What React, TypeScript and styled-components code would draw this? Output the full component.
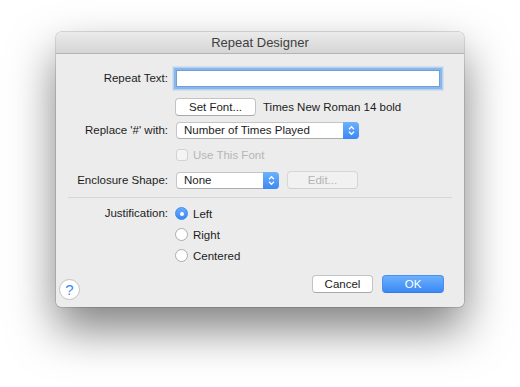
import React from 'react';
import styled, {createGlobalStyle} from 'styled-components';

const GlobalStyle = createGlobalStyle`
  html, body {
    margin: 0;
    padding: 0;
    background: #ffffff;
  }
  body {
    font-family: "Liberation Sans", Arial, sans-serif;
    -webkit-font-smoothing: antialiased;
  }
`;

const Stage = styled.div`
  padding: 32px 0 0 56px;
  height: 387px;
  box-sizing: border-box;
  overflow: hidden;
`;

const Window = styled.div`
  width: 408px;
  height: 275px;
  background: #ececec;
  border-radius: 5px;
  box-shadow: 0 0 0 0.5px rgba(0, 0, 0, 0.25), 0 22px 46px rgba(0, 0, 0, 0.5);
  display: flex;
  flex-direction: column;
  overflow: hidden;
`;

const TitleBar = styled.div`
  height: 21px;
  line-height: 21px;
  flex-shrink: 0;
  text-align: center;
  font-size: 13px;
  color: #404040;
  background: linear-gradient(#ebebeb, #d5d5d5);
  border-bottom: 1px solid #b4b4b4;
`;

const Body = styled.div`
  flex: 1;
  display: flex;
  flex-direction: column;
  font-size: 11.5px;
  color: #1c1c1c;
`;

const Row = styled.div<{ $mt: number; $h?: number; $align?: string }>`
  display: grid;
  grid-template-columns: 112px 1fr;
  column-gap: 7px;
  align-items: ${p => p.$align || 'center'};
  margin-top: ${p => p.$mt}px;
  height: ${p => (p.$h ? `${p.$h}px` : 'auto')};
`;

const Label = styled.div`
  text-align: right;
  white-space: nowrap;
  line-height: 13px;
`;

const Controls = styled.div<{ $gap?: number }>`
  display: flex;
  align-items: center;
  gap: ${p => p.$gap ?? 7}px;
`;

const TextField = styled.input`
  box-sizing: border-box;
  margin: 0 0 0 1px;
  width: 264px;
  height: 17px;
  padding: 0 4px;
  border: 1px solid #6ea1db;
  background: #ffffff;
  border-radius: 0;
  box-shadow: 0 0 0 2px #88b7ec, 0 0 0 3.5px rgba(136, 183, 236, 0.5);
  outline: none;
  font: inherit;
`;

const PushButton = styled.div<{ $w: number; $disabled?: boolean; $primary?: boolean }>`
  box-sizing: border-box;
  width: ${p => p.$w}px;
  height: 18px;
  line-height: 16px;
  text-align: center;
  border-radius: 4px;
  font-size: 11.5px;
  border: 1px solid ${p => (p.$primary ? '#4c8ff2' : p.$disabled ? '#d6d6d6' : '#c3c3c3')};
  border-bottom-color: ${p => (p.$primary ? '#3a7ae6' : p.$disabled ? '#d0d0d0' : '#a9a9a9')};
  background: ${p =>
    p.$primary
      ? 'linear-gradient(#6cb1fb, #3a89f6)'
      : p.$disabled
        ? '#f1f1f1'
        : '#ffffff'};
  color: ${p => (p.$primary ? '#ffffff' : p.$disabled ? '#b4b4b4' : '#1c1c1c')};
`;

const Note = styled.span`
  white-space: nowrap;
`;

const Popup = styled.div<{ $w: number }>`
  box-sizing: border-box;
  position: relative;
  width: ${p => p.$w}px;
  height: 17px;
  line-height: 15px;
  margin-left: 1px;
  padding-left: 7px;
  background: #ffffff;
  border: 1px solid #c5c5c5;
  border-bottom-color: #adadad;
  border-radius: 4px;
  white-space: nowrap;
`;

const Stepper = styled.div`
  position: absolute;
  top: -1px;
  right: -1px;
  bottom: -1px;
  width: 16px;
  border-radius: 0 4px 4px 0;
  background: linear-gradient(#6db2fb, #3b87f6);
  display: flex;
  align-items: center;
  justify-content: center;
`;

const CheckBox = styled.div`
  box-sizing: border-box;
  width: 12px;
  height: 12px;
  margin-left: 1px;
  border-radius: 3px;
  border: 1px solid #d2d2d2;
  background: #f4f4f4;
`;

const Dimmed = styled.span`
  color: #b6b6b6;
`;

const Separator = styled.div`
  margin: 9px 12px 0;
  height: 1px;
  background: #d6d6d6;
`;

const RadioList = styled.div`
  display: flex;
  flex-direction: column;
  gap: 8px;
`;

const RadioItem = styled.div`
  display: flex;
  align-items: center;
  gap: 5px;
  height: 13px;
`;

const RadioDot = styled.div<{ $on?: boolean }>`
  box-sizing: border-box;
  width: 13px;
  height: 13px;
  border-radius: 50%;
  border: 1px solid ${p => (p.$on ? '#3f87f2' : '#acacac')};
  background: ${p => (p.$on ? 'linear-gradient(#68acfa, #3a88f6)' : '#ffffff')};
  display: flex;
  align-items: center;
  justify-content: center;

  &::after {
    content: '';
    display: ${p => (p.$on ? 'block' : 'none')};
    width: 4px;
    height: 4px;
    border-radius: 50%;
    background: #ffffff;
  }
`;

const Footer = styled.div`
  margin-top: 13px;
  padding: 0 20px 0 3px;
  display: flex;
  justify-content: space-between;
  align-items: flex-start;
`;

const HelpButton = styled.div`
  box-sizing: border-box;
  margin-top: 4px;
  width: 21px;
  height: 21px;
  border-radius: 50%;
  background: #ffffff;
  border: 1px solid #c2c2c2;
  color: #3d86f5;
  font-size: 15px;
  line-height: 19px;
  text-align: center;
`;

const ButtonGroup = styled.div`
  display: flex;
  gap: 9px;
`;

const Chevrons = () => (
  <svg width="7" height="11" viewBox="0 0 7 11">
    <path d="M1 4.2 L3.5 1.7 L6 4.2" fill="none" stroke="#fff" strokeWidth="1.3"/>
    <path d="M1 6.8 L3.5 9.3 L6 6.8" fill="none" stroke="#fff" strokeWidth="1.3"/>
  </svg>
);

const App = () => {
  return (
    <Stage>
      <GlobalStyle/>
      <Window>
        <TitleBar>Repeat Designer</TitleBar>
        <Body>
          <Row $mt={13} $h={22}>
            <Label>Repeat Text:</Label>
            <Controls>
              <TextField defaultValue=""/>
            </Controls>
          </Row>

          <Row $mt={9} $h={18}>
            <span/>
            <Controls>
              <PushButton $w={81}>Set Font...</PushButton>
              <Note>Times New Roman 14 bold</Note>
            </Controls>
          </Row>

          <Row $mt={6} $h={17}>
            <Label>Replace '#' with:</Label>
            <Controls>
              <Popup $w={183}>
                Number of Times Played
                <Stepper><Chevrons/></Stepper>
              </Popup>
            </Controls>
          </Row>

          <Row $mt={9} $h={14}>
            <span/>
            <Controls $gap={5}>
              <CheckBox/>
              <Dimmed>Use This Font</Dimmed>
            </Controls>
          </Row>

          <Row $mt={9} $h={17}>
            <Label>Enclosure Shape:</Label>
            <Controls $gap={8}>
              <Popup $w={103}>
                None
                <Stepper><Chevrons/></Stepper>
              </Popup>
              <PushButton $w={71} $disabled>Edit...</PushButton>
            </Controls>
          </Row>

          <Separator/>

          <Row $mt={9} $align="start">
            <Label>Justification:</Label>
            <RadioList>
              <RadioItem><RadioDot $on/>Left</RadioItem>
              <RadioItem><RadioDot/>Right</RadioItem>
              <RadioItem><RadioDot/>Centered</RadioItem>
            </RadioList>
          </Row>

          <Footer>
            <HelpButton>?</HelpButton>
            <ButtonGroup>
              <PushButton $w={61}>Cancel</PushButton>
              <PushButton $w={62} $primary>OK</PushButton>
            </ButtonGroup>
          </Footer>
        </Body>
      </Window>
    </Stage>
  );
};

export default App;
